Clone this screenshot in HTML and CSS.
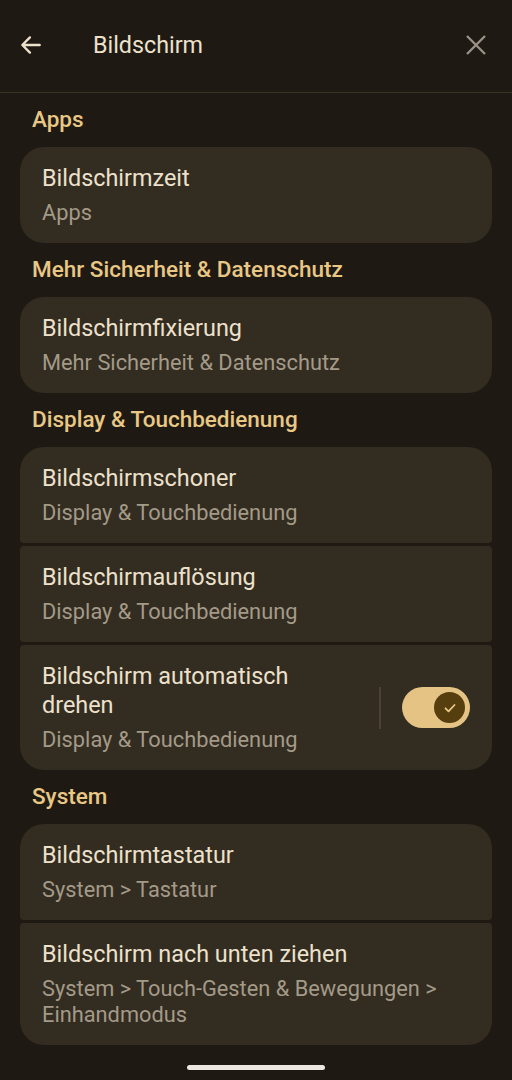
FILE: index.html
```html
<!DOCTYPE html>
<html lang="de">
<head>
<meta charset="utf-8">
<link rel="stylesheet" href="styles.css">
</head>
<body>
<div class="screen">
  <header class="topbar">
    <svg class="icon back" viewBox="0 0 24 24" width="26" height="26"><path d="M20 12H5M11 5l-7 7 7 7" fill="none" stroke="#ede1cc" stroke-width="2.2" stroke-linecap="round" stroke-linejoin="round"/></svg>
    <div class="title">Bildschirm</div>
    <svg class="icon close" viewBox="0 0 24 24" width="24" height="24"><path d="M3 3L21 21M21 3L3 21" fill="none" stroke="#9b9385" stroke-width="2.3"/></svg>
  </header>
  <main class="content">
    <div class="section">Apps</div>
    <div class="group">
      <div class="card"><div class="t">Bildschirmzeit</div><div class="s">Apps</div></div>
    </div>
    <div class="section">Mehr Sicherheit &amp; Datenschutz</div>
    <div class="group">
      <div class="card"><div class="t">Bildschirmfixierung</div><div class="s">Mehr Sicherheit &amp; Datenschutz</div></div>
    </div>
    <div class="section">Display &amp; Touchbedienung</div>
    <div class="group">
      <div class="card"><div class="t">Bildschirmschoner</div><div class="s">Display &amp; Touchbedienung</div></div>
      <div class="card"><div class="t">Bildschirmauflösung</div><div class="s">Display &amp; Touchbedienung</div></div>
      <div class="card row">
        <div class="text narrow"><div class="t">Bildschirm automatisch drehen</div><div class="s">Display &amp; Touchbedienung</div></div>
        <div class="vdiv"></div>
        <div class="switch"><div class="thumb"><svg viewBox="0 0 16 16" width="16" height="16"><path d="M3.5 8.3l3 3 6-6.3" fill="none" stroke="#e9c785" stroke-width="1.8" stroke-linecap="round" stroke-linejoin="round"/></svg></div></div>
      </div>
    </div>
    <div class="section">System</div>
    <div class="group">
      <div class="card"><div class="t">Bildschirmtastatur</div><div class="s">System &gt; Tastatur</div></div>
      <div class="card"><div class="t">Bildschirm nach unten ziehen</div><div class="s">System &gt; Touch-Gesten &amp; Bewegungen &gt; Einhandmodus</div></div>
    </div>
  </main>
  <div class="home"></div>
</div>
</body>
</html>
```

FILE: styles.css
```css
* { box-sizing: border-box; }
html, body { margin: 0; padding: 0; }
body {
  background: #1e1a13;
  font-family: Roboto, "Noto Sans", sans-serif;
  color: #ede1cc;
  width: 512px;
  height: 1080px;
  overflow: hidden;
}
.screen { display: flex; flex-direction: column; height: 1080px; }
.topbar {
  height: 93px;
  display: flex;
  align-items: center;
  padding: 0 24px 3px 18px;
  border-bottom: 1px solid #3a3427;
}
.icon { flex: none; display: block; }
.topbar .title {
  flex: 1;
  margin-left: 49px;
  font-size: 23.3px;
  color: #ede1cc;
}
.content { padding: 0 20px; }
.section {
  height: 54px;
  display: flex;
  align-items: center;
  padding-left: 12px;
  padding-bottom: 2px;
  font-size: 22.5px;
  font-weight: 500;
  color: #e9c785;
}
.group { display: flex; flex-direction: column; gap: 3px; }
.card {
  background: #332c21;
  border-radius: 4px;
  padding: 17px 22px;
}
.group .card:first-child { border-top-left-radius: 24px; border-top-right-radius: 24px; }
.group .card:last-child { border-bottom-left-radius: 24px; border-bottom-right-radius: 24px; }
.t { font-size: 23.4px; line-height: 29px; color: #ede1cc; margin-bottom: 7px; }
.s { font-size: 21.8px; line-height: 26px; color: #a39a88; }
.row { display: flex; align-items: center; }
.text.narrow { flex: 1; max-width: 320px; }
.vdiv { width: 2px; height: 42px; background: #4a4233; margin-left: 17px; margin-right: 21px; }
.switch {
  width: 68px; height: 41px;
  border-radius: 21px;
  background: #e5c385;
  display: flex; align-items: center; justify-content: flex-end;
  padding-right: 5px;
}
.thumb {
  width: 31px; height: 31px; border-radius: 50%;
  background: #563e0f;
  display: flex; align-items: center; justify-content: center;
}
.thumb svg { display: block; }
.home {
  width: 138px; height: 5px; border-radius: 3px;
  background: #ece7df;
  margin: 20px auto 0;
}
```
